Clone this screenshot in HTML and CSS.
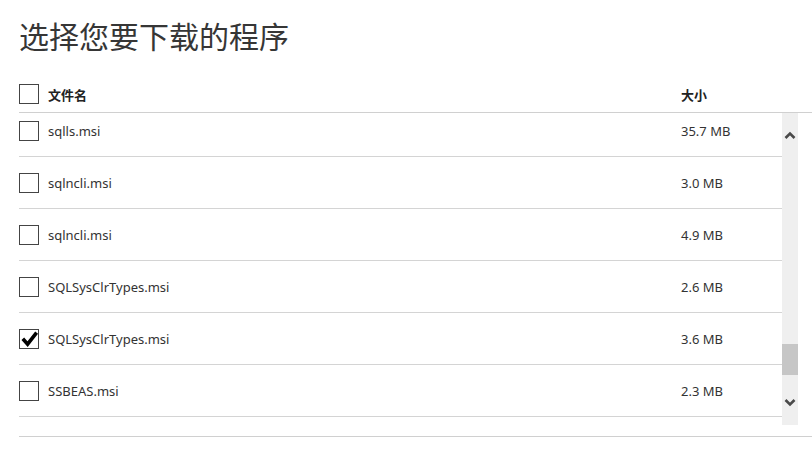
FILE: index.html
```html
<!DOCTYPE html>
<html lang="zh-CN">
<head>
<meta charset="utf-8">
<title>选择您要下载的程序</title>
<link rel="stylesheet" href="styles.css">
</head>
<body>
<main class="page">
  <h1 class="title">选择您要下载的程序</h1>
  <div class="table">
    <div class="head grid">
      <span class="box"></span>
      <span class="hname">文件名</span>
      <span class="hsize">大小</span>
    </div>
    <div class="body">
      <div class="viewport">
        <div class="rows">
          <div class="row grid"><span class="box"></span><span class="name">sqlls.msi</span><span class="size">35.7 MB</span></div>
          <div class="row grid"><span class="box"></span><span class="name">sqlncli.msi</span><span class="size">3.0 MB</span></div>
          <div class="row grid"><span class="box"></span><span class="name">sqlncli.msi</span><span class="size">4.9 MB</span></div>
          <div class="row grid"><span class="box"></span><span class="name">SQLSysClrTypes.msi</span><span class="size">2.6 MB</span></div>
          <div class="row grid"><span class="box checked"><svg viewBox="0 0 20 20" width="20" height="20"><path d="M3.8 9.8 L8.6 15.2 L17.6 3.6" fill="none" stroke="#000" stroke-width="3.6" stroke-linecap="butt" stroke-linejoin="miter"/></svg></span><span class="name">SQLSysClrTypes.msi</span><span class="size">3.6 MB</span></div>
          <div class="row grid"><span class="box"></span><span class="name">SSBEAS.msi</span><span class="size">2.3 MB</span></div>
          <div class="row grid row-empty"></div>
        </div>
      </div>
      <div class="scrollbar">
        <div class="sbtn"><svg viewBox="0 0 12 8" width="12" height="8"><path d="M1.5 7 L6 2.5 L10.5 7" fill="none" stroke="#4a4a4a" stroke-width="2.6"/></svg></div>
        <div class="track"><div class="thumb"></div></div>
        <div class="sbtn"><svg viewBox="0 0 12 8" width="12" height="8"><path d="M1.5 1 L6 5.5 L10.5 1" fill="none" stroke="#4a4a4a" stroke-width="2.6"/></svg></div>
      </div>
    </div>
    <div class="foot"></div>
  </div>
</main>
</body>
</html>
```

FILE: styles.css
```css
html, body {
  margin: 0;
  padding: 0;
  background: #fff;
}
body {
  font-family: "Noto Sans", "Noto Sans CJK SC", sans-serif;
  color: #333;
  width: 812px;
  height: 463px;
  overflow: hidden;
}
.page {
  padding-left: 19px;
}
.title {
  margin: 0;
  padding-top: 16px;
  height: 76px;
  box-sizing: border-box;
  font-family: "Noto Sans CJK SC", sans-serif;
  font-weight: 400;
  font-size: 30px;
  line-height: 38px;
  color: #363636;
}
.grid {
  display: grid;
  grid-template-columns: 20px 624px 1fr;
  column-gap: 9px;
  align-items: center;
}
.head {
  height: 36px;
  border-bottom: 1px solid #d0d0d0;
  font-family: "Noto Sans CJK SC", sans-serif;
  font-weight: 700;
  font-size: 13px;
  color: #222;
}
.box {
  width: 20px;
  height: 20px;
  box-sizing: border-box;
  border: 1px solid #444;
  background: #fff;
  display: block;
  position: relative;
}
.box svg {
  position: absolute;
  left: -1px;
  top: -1px;
}
.body {
  display: flex;
  height: 312px;
}
.viewport {
  width: 763px;
  height: 312px;
  overflow: hidden;
}
.rows {
  margin-top: -8px;
}
.row {
  height: 51px;
  border-bottom: 1px solid #d4d4d4;
  font-size: 13px;
  color: #333;
}
.scrollbar {
  width: 16px;
  background: #efefef;
  display: flex;
  flex-direction: column;
}
.sbtn {
  height: 44px;
  display: flex;
  align-items: center;
  justify-content: center;
}
.track {
  flex: 1;
}
.thumb {
  margin-top: 187px;
  height: 31px;
  background: #c6c6c6;
}
.foot {
  margin-top: 11px;
  border-top: 1px solid #d0d0d0;
}
```
